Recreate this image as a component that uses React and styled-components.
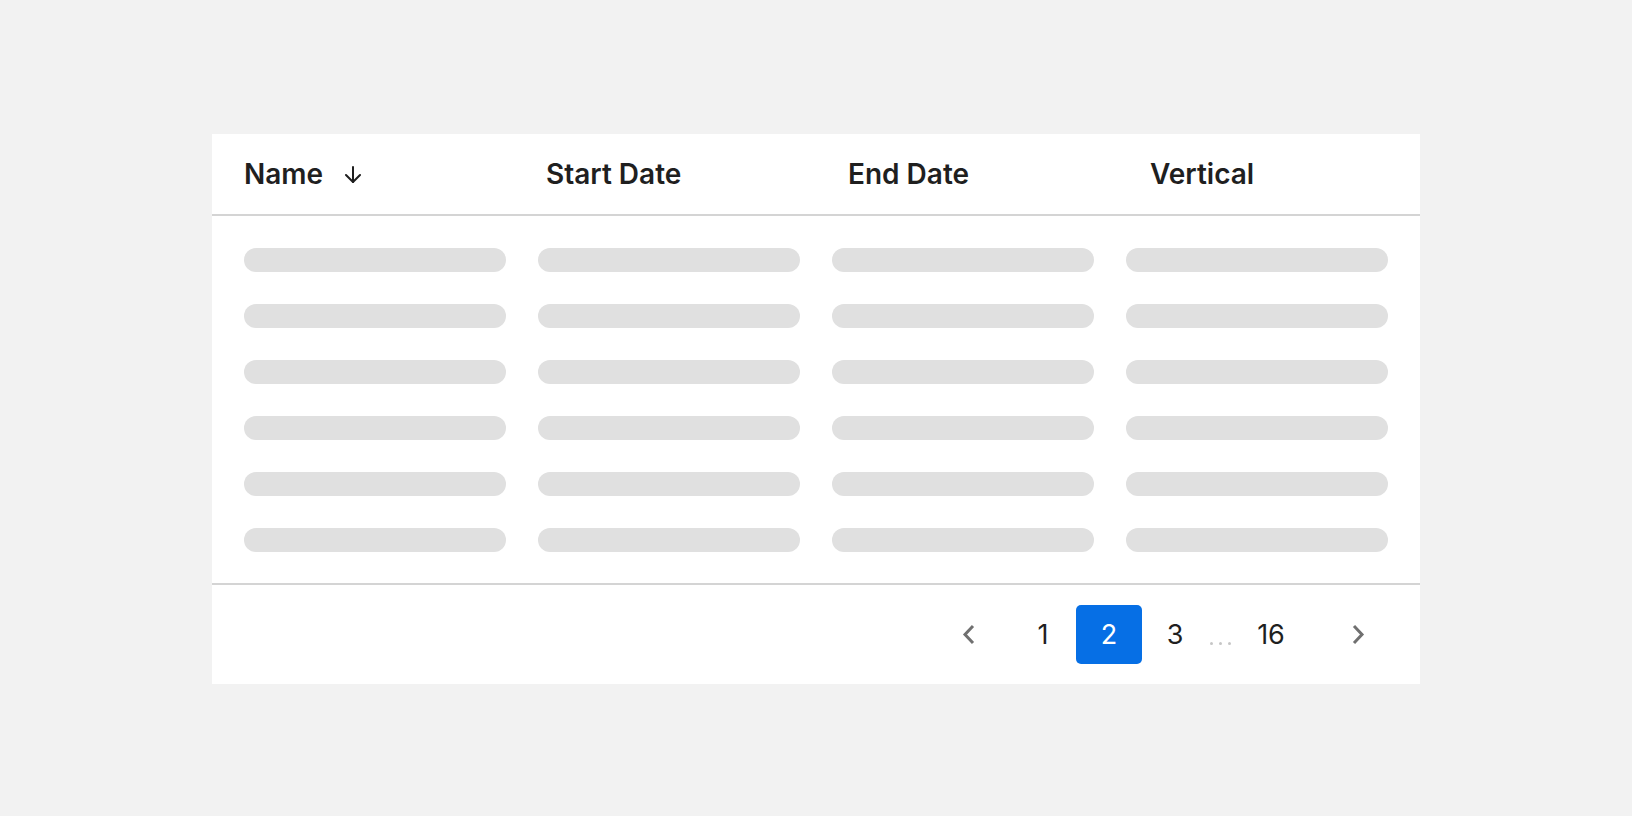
import React from 'react'
import styled, { createGlobalStyle } from 'styled-components'

const GlobalStyle = createGlobalStyle`
    html, body {
        margin: 0;
        padding: 0;
        background: #f2f2f2;
        font-family: Inter, "Noto Sans", sans-serif;
    }
`;

const columns = ['Name', 'Start Date', 'End Date', 'Vertical']
const rows = [0, 1, 2, 3, 4, 5]

function ArrowDown() {
    return (
        <svg width="18" height="17" viewBox="0 0 18 17" fill="none" stroke="#1f1f1f" strokeWidth="2" strokeLinecap="round" strokeLinejoin="round">
            <path d="M9 1v15" />
            <path d="M2 9l7 7 7-7" />
        </svg>
    )
}

function Chevron({ dir }) {
    return (
        <svg width="13" height="21" viewBox="0 0 13 21" fill="none" stroke="#707070" strokeWidth="3">
            {dir === 'left'
                ? <path d="M11 2L3 10.5 11 19" />
                : <path d="M2 2l8 8.5L2 19" />}
        </svg>
    )
}

function App() {
    return (
        <Page>
            <GlobalStyle />
            <Card>
                <Header>
                    {columns.map((c, i) => (
                        <HeaderCell key={c}>
                            {c}
                            {i === 0 && <SortIcon><ArrowDown /></SortIcon>}
                        </HeaderCell>
                    ))}
                </Header>
                <Body>
                    {rows.map(r => columns.map(c => <Skeleton key={r + c} />))}
                </Body>
                <Footer>
                    <NavButton aria-label="previous" $side="left"><Chevron dir="left" /></NavButton>
                    <PageButton>1</PageButton>
                    <PageButton $active>2</PageButton>
                    <PageButton>3</PageButton>
                    <Ellipsis><Dot /><Dot /><Dot /></Ellipsis>
                    <PageButton>16</PageButton>
                    <NavButton aria-label="next" $side="right"><Chevron dir="right" /></NavButton>
                </Footer>
            </Card>
        </Page>
    )
}

const Page = styled.div`
    min-height: 100vh;
    box-sizing: border-box;
    padding-top: 2px;
    display: flex;
    align-items: center;
    justify-content: center;
`;

const Card = styled.div`
    width: 1208px;
    background: #fff;
`;

const Header = styled.div`
    display: grid;
    grid-template-columns: repeat(4, 1fr);
    height: 80px;
    border-bottom: 2px solid #d4d4d4;
`;

const HeaderCell = styled.div`
    display: flex;
    align-items: center;
    padding-left: 32px;
    font-size: 28px;
    font-weight: 600;
    color: #1f1f1f;
`;

const SortIcon = styled.span`
    display: inline-flex;
    margin-left: 21px;
    margin-top: 1px;
`;

const Body = styled.div`
    display: grid;
    grid-template-columns: repeat(4, 1fr);
    column-gap: 32px;
    row-gap: 32px;
    padding: 32px 32px 31px;
    border-bottom: 2px solid #d4d4d4;
`;

const Skeleton = styled.div`
    height: 24px;
    border-radius: 12px;
    background: #e0e0e0;
`;

const Footer = styled.div`
    display: flex;
    justify-content: flex-end;
    align-items: center;
    padding: 20px 30px 20px 0;
`;

const PageButton = styled.button`
    width: 66px;
    height: 59px;
    border: none;
    border-radius: 5px;
    padding: 0;
    font-family: inherit;
    font-size: 27px;
    font-weight: 400;
    background: ${p => (p.$active ? '#066fe5' : 'transparent')};
    color: ${p => (p.$active ? '#fff' : '#1f1f1f')};
    cursor: pointer;
`;

const NavButton = styled.button`
    width: 64px;
    height: 59px;
    border: none;
    background: transparent;
    padding: 0;
    display: flex;
    align-items: center;
    justify-content: center;
    margin-right: ${p => (p.$side === 'left' ? '10px' : '0')};
    margin-left: ${p => (p.$side === 'right' ? '22px' : '0')};
    cursor: pointer;
`;

const Ellipsis = styled.span`
    width: 30px;
    height: 59px;
    display: flex;
    align-items: flex-end;
    gap: 6px;
    padding: 0 0 19px 2px;
    box-sizing: border-box;
`;

const Dot = styled.span`
    width: 3px;
    height: 3px;
    border-radius: 50%;
    background: #c6c6c6;
`;

export default App
